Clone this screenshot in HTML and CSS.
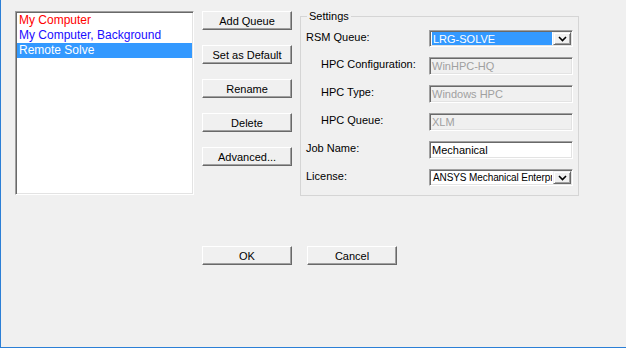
FILE: index.html
```html
<!DOCTYPE html>
<html lang="en">
<head>
  <meta charset="UTF-8">
  <meta name="viewport" content="width=device-width, initial-scale=1.0">
  <title>Solve Process Settings</title>
  <link rel="stylesheet" href="styles.css">
</head>
<body>
  <div class="window">
    <div class="top">
      <ul class="queue-list">
        <li class="local">My Computer</li>
        <li class="background">My Computer, Background</li>
        <li class="selected">Remote Solve</li>
      </ul>

      <div class="actions">
        <button class="btn">Add Queue</button>
        <button class="btn">Set as Default</button>
        <button class="btn">Rename</button>
        <button class="btn">Delete</button>
        <button class="btn">Advanced...</button>
      </div>

      <fieldset class="settings">
        <legend>Settings</legend>
        <div class="row first">
          <span class="label">RSM Queue:</span>
          <div class="combo">
            <span class="combo-value highlighted">LRG-SOLVE</span>
            <span class="combo-arrow">
              <svg width="9" height="6" viewBox="0 0 9 6"><polyline points="1,1 4.5,4.5 8,1" fill="none" stroke="#000" stroke-width="1.6"/></svg>
            </span>
          </div>
        </div>
        <div class="row">
          <span class="label sub">HPC Configuration:</span>
          <div class="field disabled">WinHPC-HQ</div>
        </div>
        <div class="row">
          <span class="label sub">HPC Type:</span>
          <div class="field disabled">Windows HPC</div>
        </div>
        <div class="row">
          <span class="label sub">HPC Queue:</span>
          <div class="field disabled">XLM</div>
        </div>
        <div class="row">
          <span class="label">Job Name:</span>
          <div class="field">Mechanical</div>
        </div>
        <div class="row">
          <span class="label">License:</span>
          <div class="combo">
            <span class="combo-value narrow">ANSYS Mechanical Enterpri</span>
            <span class="combo-arrow">
              <svg width="9" height="6" viewBox="0 0 9 6"><polyline points="1,1 4.5,4.5 8,1" fill="none" stroke="#000" stroke-width="1.6"/></svg>
            </span>
          </div>
        </div>
      </fieldset>
    </div>

    <div class="dialog-buttons">
      <button class="btn">OK</button>
      <button class="btn">Cancel</button>
    </div>
  </div>
</body>
</html>
```

FILE: styles.css
```css
body {
  margin: 0;
  padding: 0;
  background-color: #f0f0f0;
  font-family: "Liberation Sans", Arial, sans-serif;
  font-size: 11px;
  color: #000;
}

.window {
  box-sizing: border-box;
  height: 348px;
  border-left: 1px solid #2b7fd6;
  border-bottom: 1px solid #2b7fd6;
  padding: 11px 0 0 14px;
}

.top {
  display: flex;
  align-items: flex-start;
}

/* Lista de colas */
.queue-list {
  box-sizing: border-box;
  width: 179px;
  height: 184px;
  margin: 0;
  list-style: none;
  background-color: #fff;
  border: 1px solid;
  border-color: #a0a0a0 #fff #fff #a0a0a0;
  box-shadow: inset 1px 1px 0 #696969, inset -1px -1px 0 #e3e3e3;
  padding: 1px;
  font-size: 12px;
}

.queue-list li {
  height: 15px;
  line-height: 15px;
  padding-left: 2px;
  white-space: nowrap;
}

.queue-list .local {
  color: #ff0000;
}

.queue-list .background {
  color: #1a0dff;
}

.queue-list .selected {
  background-color: #3399ff;
  color: #fff;
}

/* Botones */
.btn {
  box-sizing: border-box;
  width: 90px;
  height: 19px;
  padding: 0;
  font-family: inherit;
  font-size: 11px;
  color: #000;
  background-color: #f0f0f0;
  border: 1px solid;
  border-color: #fff #696969 #696969 #fff;
  box-shadow: inset -1px -1px 0 #a0a0a0;
}

.actions {
  display: flex;
  flex-direction: column;
  gap: 15px;
  margin-left: 8px;
}

/* Grupo de ajustes */
.settings {
  box-sizing: border-box;
  width: 279px;
  margin: -1px 0 0 8px;
  padding: 0 4px 8px 5px;
  border: 1px solid #d5d5d5;
}

.settings legend {
  margin-left: 1px;
  padding: 0 2px;
  line-height: 13px;
}

.row {
  display: flex;
  align-items: flex-start;
  height: 18px;
  margin-top: 10px;
}

.row.first {
  margin-top: 7px;
  margin-bottom: -1px;
}

.label {
  width: 123px;
  line-height: 14px;
  flex-shrink: 0;
}

.label.sub {
  box-sizing: border-box;
  padding-left: 15px;
}

.field,
.combo {
  box-sizing: border-box;
  width: 144px;
  height: 18px;
  border: 1px solid;
  border-color: #a0a0a0 #fff #fff #a0a0a0;
  box-shadow: inset 1px 1px 0 #696969, inset -1px -1px 0 #e3e3e3;
  background-color: #fff;
}

.field {
  padding: 2px 0 0 2px;
  line-height: 13px;
  white-space: nowrap;
  overflow: hidden;
}

.field.disabled {
  background-color: #f0f0f0;
  color: #a0a0a0;
}

.combo {
  display: flex;
  padding: 1px;
  height: 17px;
}

.combo-value {
  flex: 1;
  overflow: hidden;
  white-space: nowrap;
  padding-left: 2px;
  line-height: 14px;
  margin: 0 1px 0 0;
}

.combo-value.narrow {
  font-size: 10px;
  letter-spacing: -0.1px;
}

.combo-value.highlighted {
  background-color: #3399ff;
  color: #fff;
  margin-left: 1px;
  padding-left: 1px;
}

.combo-arrow {
  box-sizing: border-box;
  width: 18px;
  display: flex;
  align-items: center;
  justify-content: center;
  background-color: #f0f0f0;
  border: 1px solid;
  border-color: #f0f0f0 #696969 #696969 #f0f0f0;
  box-shadow: inset 1px 1px 0 #fff, inset -1px -1px 0 #a0a0a0;
}

/* Aceptar / Cancelar */
.dialog-buttons {
  display: flex;
  gap: 15px;
  margin: 50px 0 0 187px;
}
```
